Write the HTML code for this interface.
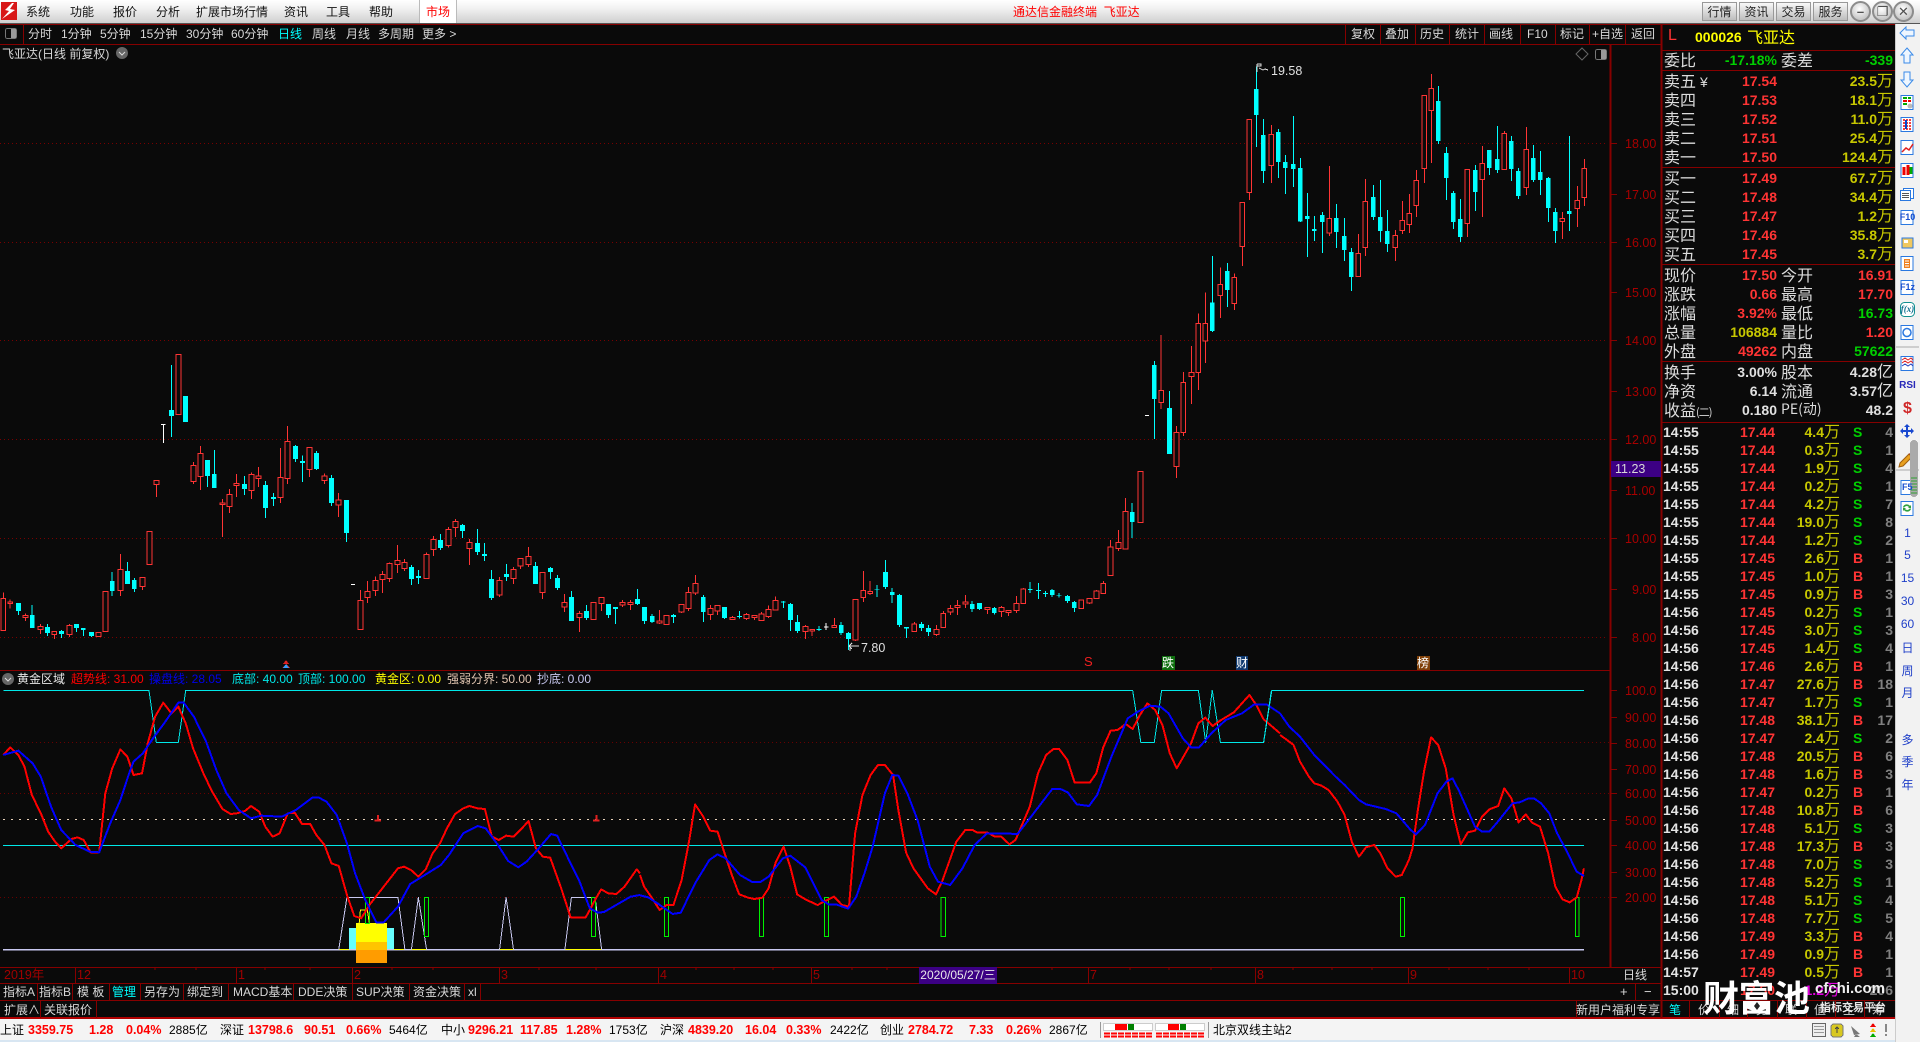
<!DOCTYPE html>
<html lang="zh"><head><meta charset="utf-8"><title>通达信金融终端 飞亚达</title>
<style>
html,body{margin:0;padding:0;background:#0a0a0a}
body{position:relative;width:1920px;height:1042px;overflow:hidden;font:12px/18px "Liberation Sans","WenQuanYi Zen Hei","Noto Sans CJK SC",sans-serif;color:#d8d8d8}
.a{position:absolute;white-space:nowrap}
.bar{position:absolute;left:0;top:0;width:1920px;height:23px;background:linear-gradient(#fff,#f2f2f2 35%,#cfcfcf);border-bottom:1px solid #555}
.m{position:absolute;top:4px;color:#111;font-size:12px;line-height:17px;white-space:nowrap}
.bt{position:absolute;top:2px;height:17px;width:33px;text-align:center;color:#222;background:linear-gradient(#f8f8f8,#bdbdbd);border:1px solid #999;line-height:18px;box-sizing:content-box}
.cb{position:absolute;top:1px;width:17px;height:17px;border-radius:50%;background:radial-gradient(circle at 45% 35%,#fff,#c8c8c8 70%);border:2px solid #8c8c8c;color:#505050;text-align:center;font:bold 13px/17px "Liberation Sans","DejaVu Sans",sans-serif}
.tb{position:absolute;top:25px;line-height:19px;color:#d8d8d8;white-space:nowrap}
.tab{position:absolute;line-height:17px;color:#d8d8d8;white-space:nowrap;margin-top:1px}
.ax{position:absolute;left:1625px;width:36px;font-size:12.5px;line-height:14px;color:#a80000;white-space:nowrap;margin-top:1px}
.dx{position:absolute;top:967px;font-size:12.5px;line-height:17px;color:#a00000;white-space:nowrap}
.ind{position:absolute;top:670px;line-height:18px;white-space:nowrap;font-size:12px}
.r{position:relative;height:19px;width:234px;font:16px/19px "WenQuanYi Zen Hei","Noto Sans CJK SC",sans-serif;color:#dcdcdc}
.r>*{position:absolute;top:0;white-space:nowrap;font-style:normal;font-family:"Liberation Sans","WenQuanYi Zen Hei",sans-serif}
.r span{left:3px;font-family:"WenQuanYi Zen Hei","Noto Sans CJK SC",sans-serif;margin-top:-1px}
.r span.b{left:120px}
.r b{font-size:14px;font-weight:bold}
.p{right:118px;color:#ff3434}.g{color:#00d000!important}.y{color:#c8c800!important}.w{color:#e0e0e0!important}
.v{right:2px;color:#c8c800}
u{text-decoration:none;font:16px/0 "WenQuanYi Zen Hei","Noto Sans CJK SC",sans-serif}
.k{position:relative;height:18px;width:234px;line-height:18px}
.k>b{position:absolute;top:0;font-size:14px;white-space:nowrap}
.t{left:2px;color:#e4e4e4}.q{right:120px;color:#ff3434}.o{right:55px;color:#c8c800}.o u{color:#c8c800}.s{left:192px;color:#00d000}.e{left:192px;color:#ff3434}.n{right:2px;color:#808080}
.st{position:absolute;top:1021px;font-size:12px;line-height:18px;color:#000;white-space:nowrap}
.sr{position:absolute;top:1021px;font-size:12.5px;line-height:18px;font-weight:bold;color:#f00;white-space:nowrap}
.sd{position:absolute;left:1895px;width:25px;text-align:center;color:#2040c8;font-size:12px;line-height:14px}
</style></head><body>
<div class="a" style="left:0;top:1019px;width:1895px;height:21px;background:#f4f4f4"></div>
<div class="a" style="left:0;top:1040px;width:1920px;height:2px;background:#d8e6f2"></div>
<div class="a" style="left:1895px;top:24px;width:25px;height:1018px;background:#f2f2f2;border-left:1px solid #ccc;box-sizing:border-box"></div>
<div class="bar"></div>
<div class="a" style="left:419px;top:0;width:38px;height:23px;background:#fff;border-left:1px solid #bbb;border-right:1px solid #bbb;box-sizing:border-box"></div>

<svg class="a" style="left:0;top:0" width="1920" height="1042" viewBox="0 0 1920 1042" fill="none" shape-rendering="crispEdges">
<style>svg *{vector-effect:non-scaling-stroke}</style>
<!-- logo -->
<rect x="1" y="2" width="16" height="18" fill="#d81818"/><path d="M12 3L5 10l4 1-7 8 13-9-5-1 4-6z" fill="#fff" shape-rendering="auto"/>
<!-- structure lines -->
<path d="M0 24.5H1895M0 44.5H1661M0 670.5H1610M0 967.5H1661M0 983.5H1661M1661 50.5H1895M1661 70.5H1895M1661 167.5H1895M1661 264.5H1895M1661 361.5H1895M1661 422.5H1895M0 1000.5H1895" stroke="#860000"/>
<path d="M0 1018H1895" stroke="#b00000" stroke-width="2"/>
<path d="M1610.5 44V967M1661.5 24V1018" stroke="#860000" stroke-width="2"/>
<path d="M23.5 24V44M1345.5 25V44M1380.5 25V44M1415.5 25V44M1449.5 25V44M1484.5 25V44M1520.5 25V44M1555.5 25V44M1589.5 25V44M1625.5 25V44M37.5 984V1000M72.5 984V1000M109.5 984V1000M140.5 984V1000M183.5 984V1000M228.5 984V1000M293.5 984V1000M352.5 984V1000M409.5 984V1000M464.5 984V1000M480.5 984V1000M40.5 1001V1018M96.5 1001V1018M1576.5 1001V1018M1689.5 1001V1018M1719.5 1001V1018M1747.5 1001V1018M1777.5 1001V1018M1806.5 1001V1018M1835.5 1001V1018M1864.5 1001V1018M1635.5 984V1000M75.5 968V983M236.5 968V983M352.5 968V983M499.5 968V983M658.5 968V983M811.5 968V983M1088.5 968V983M1255.5 968V983M1408.5 968V983M1569.5 968V983" stroke="#860000"/>
<path d="M155 968v2M196 968v2M265 968v2M310 968v2M392 968v2M433 968v2M539 968v2M596 968v2M696 968v2M734 968v2M773 968v2M852 968v2M887 968v2M1052 968v2M1130 968v2M1169 968v2M1211 968v2M1293 968v2M1332 968v2M1372 968v2M1449 968v2M1488 968v2M1529 968v2" stroke="#860000"/>
<!-- grid candle -->
<path d="M0 143.5H1605M0 242.5H1605M0 340.5H1605M0 439.5H1605M0 538.5H1605M0 637.5H1605" stroke="#780000" stroke-dasharray="1 3"/>
<path d="M1610 143.5h7M1610 194.5h7M1610 242.5h7M1610 292.5h7M1610 340.5h7M1610 391.5h7M1610 439.5h7M1610 490.5h7M1610 538.5h7M1610 589.5h7M1610 637.5h7M1610 690.5h7M1610 717.5h7M1610 743.5h7M1610 769.5h7M1610 793.5h7M1610 820.5h7M1610 845.5h7M1610 872.5h7M1610 897.5h7" stroke="#860000"/>

<!-- z10 candles -->
<g transform="translate(0,340) scale(.40816,.33333)">
<path stroke="#ff3434" d="M8 757V872M25 778V806M62 820V843M99 852V882M133 874V897M170 852V891M241 877V890M258 754V875M295 642V768M349 712V750M366 574V674M383 421V471M437 43V224M474 366V432M491 318V450M545 477V591M562 447V519M579 402V471M616 398V477M633 381V441M687 324V489M704 258V432M758 322V411M795 400V432M829 459V531M883 750V869M900 723V789M920 709V768M937 693V759M954 667V726M974 615V699M991 657V693M1045 637V716M1062 588V648M1099 561V623M1116 537V591M1150 597V675M1224 711V771M1258 681V732M1275 654V687M1295 621V681M1329 697V777M1383 762V816M1420 813V876M1454 787V839M1474 772V813M1525 780V801M1545 780V810"/>
<path stroke="#00ffff" d="M45 789V825M79 795V864M116 852V888M151 870V894M187 852V876M204 864V888M224 876V891M275 696V768M312 666V732M329 714V756M420 75V291M454 168V246M508 360V441M525 330V444M599 408V465M650 423V534M670 459V498M724 315V366M741 346V426M775 333V390M812 405V498M849 480V606M1008 675V735M1025 690V732M1079 582V630M1133 552V594M1170 567V645M1187 609V663M1204 690V780M1241 672V723M1312 666V732M1349 681V717M1366 705V750M1400 753V843M1437 795V840M1491 792V834M1508 801V852M1562 747V795"/>
<g transform="translate(-6,0)">
<path stroke="#ff3434" fill="#0a0a0a" d="M8 775h12V872h-12zM25 786h12V791h-12zM62 826h12V833h-12zM99 859h12V869h-12zM133 874h12V884h-12zM170 856h12V884h-12zM241 877h12V890h-12zM258 754h12V875h-12zM295 688h12V752h-12zM349 712h12V740h-12zM366 574h12V674h-12zM383 421h12V434h-12zM437 43h12V224h-12zM474 376h12V425h-12zM491 340h12V410h-12zM545 489h12V494h-12zM562 463h12V500h-12zM579 430h12V437h-12zM616 403h12V452h-12zM633 408h12V416h-12zM687 412h12V473h-12zM704 304h12V416h-12zM758 322h12V389h-12zM795 408h12V422h-12zM829 480h12V495h-12zM883 781h12V869h-12zM900 754h12V773h-12zM920 721h12V752h-12zM937 703h12V719h-12zM954 670h12V716h-12zM974 661h12V674h-12zM991 667h12V686h-12zM1045 643h12V716h-12zM1062 598h12V629h-12zM1099 568h12V617h-12zM1116 544h12V563h-12zM1150 607h12V626h-12zM1224 721h12V765h-12zM1258 688h12V716h-12zM1275 655h12V678h-12zM1295 649h12V674h-12zM1329 697h12V758h-12zM1383 787h12V801h-12zM1420 820h12V833h-12zM1454 787h12V839h-12zM1474 772h12V791h-12zM1525 787h12V795h-12zM1545 787h12V794h-12z"/>
<path fill="#00ffff" d="M45 789h12V813h-12zM79 825h12V864h-12zM116 861h12V879h-12zM151 873h12V882h-12zM187 852h12V864h-12zM204 864h12V870h-12zM224 876h12V888h-12zM275 723h12V753h-12zM312 693h12V732h-12zM329 720h12V747h-12zM420 210h12V228h-12zM454 168h12V246h-12zM508 360h12V408h-12zM525 402h12V444h-12zM599 432h12V447h-12zM650 435h12V504h-12zM670 471h12V477h-12zM724 318h12V357h-12zM741 363h12V369h-12zM775 339h12V387h-12zM812 414h12V489h-12zM849 480h12V579h-12zM1008 681h12V717h-12zM1025 708h12V714h-12zM1079 600h12V624h-12zM1133 555h12V573h-12zM1170 609h12V636h-12zM1187 642h12V648h-12zM1204 717h12V774h-12zM1241 702h12V711h-12zM1312 678h12V732h-12zM1349 684h12V696h-12zM1366 714h12V744h-12zM1400 771h12V843h-12zM1437 813h12V834h-12zM1491 792h12V825h-12zM1508 801h12V807h-12zM1562 777h12V792h-12z"/>
</g>
<path stroke="#fff" d="M400 253V309M395 253h10M860 733h10"/>
</g>

<!-- z11 candles -->
<g transform="translate(640,340) scale(.40816,.33333)">
<path stroke="#ff3434" d="M48 810V852M65 826V854M102 793V819M119 741V813M136 705V765M173 795V840M190 796V825M227 828V840M261 819V840M281 825V840M298 816V843M315 796V834M332 769V810M405 855V897M422 867V888M476 834V864M528 778V903M547 693V786M564 723V765M672 846V875M726 855V888M743 813V863M761 795V825M778 780V825M797 765V804M851 802V822M886 798V831M903 810V828M922 768V819M939 744V790M1081 780V806M1101 775V792M1118 750V777M1135 723V761M1153 600V707M1172 570V633M1189 474V627M1226 394V548M1277 -15V207M1314 258V414M1331 96V288M1351 18V192"/>
<path stroke="#00ffff" d="M11 801V852M30 822V849M82 822V849M155 765V846M207 801V837M244 813V836M351 783V804M369 789V873M386 825V879M439 858V873M493 846V885M511 876V930M581 735V771M601 660V747M618 744V789M636 762V861M653 861V894M690 846V873M707 855V888M814 783V816M832 789V810M868 801V823M956 726V759M976 729V777M993 753V771M1010 747V771M1027 759V772M1047 765V789M1064 783V816M1206 489V594M1260 63V297M1297 153V342"/>
<g transform="translate(-6,0)">
<path stroke="#ff3434" fill="#0a0a0a" d="M48 843h12V849h-12zM65 826h12V854h-12zM102 793h12V816h-12zM119 757h12V806h-12zM136 730h12V759h-12zM173 805h12V824h-12zM190 796h12V813h-12zM227 832h12V838h-12zM261 823h12V836h-12zM281 826h12V832h-12zM298 822h12V842h-12zM315 808h12V830h-12zM332 781h12V810h-12zM405 859h12V875h-12zM422 868h12V873h-12zM476 856h12V862h-12zM528 778h12V900h-12zM547 751h12V773h-12zM564 754h12V761h-12zM672 852h12V875h-12zM726 868h12V884h-12zM743 820h12V863h-12zM761 805h12V816h-12zM778 796h12V803h-12zM797 786h12V792h-12zM851 802h12V808h-12zM886 802h12V815h-12zM903 811h12V818h-12zM922 790h12V812h-12zM939 747h12V790h-12zM1081 780h12V806h-12zM1101 775h12V789h-12zM1118 753h12V776h-12zM1135 730h12V761h-12zM1153 621h12V707h-12zM1172 607h12V626h-12zM1189 514h12V627h-12zM1226 394h12V548h-12zM1277 151h12V188h-12zM1314 277h12V380h-12zM1331 127h12V278h-12zM1351 97h12V110h-12z"/>
<path fill="#00ffff" d="M11 801h12V843h-12zM30 828h12V846h-12zM82 825h12V831h-12zM155 771h12V816h-12zM207 801h12V834h-12zM244 828h12V831h-12zM351 784h12V787h-12zM369 792h12V840h-12zM386 846h12V873h-12zM439 867h12V870h-12zM493 855h12V879h-12zM511 879h12V897h-12zM581 747h12V749h-12zM601 696h12V741h-12zM618 756h12V765h-12zM636 765h12V855h-12zM653 861h12V866h-12zM690 852h12V864h-12zM707 864h12V876h-12zM814 792h12V807h-12zM832 789h12V807h-12zM868 804h12V819h-12zM956 747h12V750h-12zM976 750h12V753h-12zM993 759h12V762h-12zM1010 750h12V765h-12zM1027 765h12V767h-12zM1047 768h12V783h-12zM1064 786h12V804h-12zM1206 516h12V546h-12zM1260 75h12V177h-12zM1297 204h12V342h-12z"/>
</g>
<path stroke="#fff" d="M456 849V870M451 861h11M1237 226h10"/>
</g>

<!-- z12 candles -->
<g transform="translate(1180,40) scale(.33333,.33333)">
<path stroke="#ff3434" d="M55 820V1050M76 757V969M121 682V834M163 700V810M187 487V678M208 238V480M274 255V429M448 378V588M535 582V710M556 417V648M646 570V663M667 483V582M688 462V579M709 390V531M733 166V429M754 102V369M862 388V591M907 318V531M973 273V389M1039 261V465M1147 516V597M1192 438V561M1213 357V498"/>
<path stroke="#00ffff" d="M97 648V876M142 669V801M229 80V321M250 237V429M295 267V414M316 345V462M340 228V441M361 354V546M382 459V651M403 528V603M427 516V639M469 492V624M493 534V663M514 624V753M580 435V540M601 420V606M622 510V636M775 138V312M799 321V480M820 453V567M841 477V606M886 375V513M928 330V405M952 258V399M994 288V423M1015 384V477M1060 315V426M1081 333V465M1105 411V546M1126 504V609M1168 288V573"/>
<g transform="translate(-7,0)">
<path stroke="#ff3434" fill="#0a0a0a" d="M55 851h14V998h-14zM76 851h14V903h-14zM121 733h14V767h-14zM163 712h14V791h-14zM187 487h14V620h-14zM208 238h14V458h-14zM274 283h14V377h-14zM448 535h14V579h-14zM535 640h14V710h-14zM556 484h14V623h-14zM646 586h14V623h-14zM667 541h14V572h-14zM688 520h14V554h-14zM709 421h14V497h-14zM733 166h14V386h-14zM754 145h14V212h-14zM862 388h14V551h-14zM907 370h14V418h-14zM973 280h14V389h-14zM1039 328h14V443h-14zM1147 535h14V544h-14zM1192 481h14V506h-14zM1213 385h14V472h-14z"/>
<path fill="#00ffff" d="M97 787h14V873h-14zM142 693h14V750h-14zM229 147h14V225h-14zM250 285h14V393h-14zM295 276h14V366h-14zM316 366h14V384h-14zM340 372h14V387h-14zM361 384h14V544h-14zM382 528h14V537h-14zM403 567h14V573h-14zM427 525h14V546h-14zM469 534h14V576h-14zM493 588h14V630h-14zM514 636h14V711h-14zM580 471h14V531h-14zM601 531h14V573h-14zM622 573h14V612h-14zM775 183h14V303h-14zM799 339h14V414h-14zM820 459h14V546h-14zM841 537h14V591h-14zM886 390h14V456h-14zM928 330h14V384h-14zM952 357h14V390h-14zM994 303h14V387h-14zM1015 393h14V468h-14zM1060 354h14V420h-14zM1081 396h14V420h-14zM1105 414h14V504h-14zM1126 516h14V573h-14zM1168 513h14V522h-14z"/>
</g>
</g>

<!-- max/min markers -->
<path d="M1257 64h4v2h-4M1257 64V72M1259 68l2 1 2 1 2-1 3 1" stroke="#e0e0e0"/>
<path d="M849 646h10M849 646l3-3M849 646l3 3M850 646v5" stroke="#e0e0e0"/>
<path d="M1582 48l6 6-6 6-6-6z" stroke="#666" shape-rendering="auto"/>
<rect x="1595.5" y="49.5" width="11" height="10" rx="2" stroke="#777" fill="#0a0a0a"/><rect x="1601" y="50" width="5" height="9" fill="#999"/>
<rect x="5.5" y="28.5" width="11" height="10" rx="2" stroke="#777"/><rect x="11" y="29" width="5" height="9" fill="#999"/>
<!-- chevrons -->
<circle cx="122" cy="53" r="6" fill="#666" shape-rendering="auto"/><path d="M119 52l3 3 3-3" stroke="#ddd" shape-rendering="auto"/>
<circle cx="8" cy="679" r="6" fill="#666" shape-rendering="auto"/><path d="M5 678l3 3 3-3" stroke="#ddd" shape-rendering="auto"/>
<!-- event marks -->
<path d="M286 660l3 4h-6zM286 664l4 4h-8z" fill="#e02020"/><path d="M286 664l3 4h-6z" fill="#30a0ff"/>
<rect x="1162" y="656" width="13" height="14" fill="#107010"/><rect x="1236" y="656" width="12" height="14" fill="#103a70"/><rect x="1417" y="656" width="13" height="14" fill="#804008"/>

<!-- indicator grid -->
<path d="M0 742.5H1610M0 793.5H1610M0 897.5H1610" stroke="#680000" stroke-dasharray="1 3"/>
<path d="M3 819.5H1610" stroke="#e8d0b8" stroke-dasharray="2 6"/>
<path d="M3 845.5H1584" stroke="#00e8e8"/>
<path d="M3 949.5H1584" stroke="#c8c8f0" stroke-width="1.5"/>
<!-- gold block -->
<rect x="349" y="928" width="45" height="21" fill="#66ffff"/>
<rect x="356" y="923" width="31" height="19" fill="#ffff00"/>
<rect x="356" y="942" width="31" height="8" fill="#ffc400"/>
<rect x="356" y="950" width="31" height="13" fill="#ff9c00"/>

<g transform="translate(0,660) scale(.40816,.33333)" stroke-linejoin="round">
<path stroke="#ffff00" d="M830 868H855M965 868H990M1008 868H1045M1224 868H1258M1384 868H1474"/>
<path stroke="#c8c8f0" d="M830 868L850 712H975L992 868M1008 868L1025 712L1045 868M1224 868L1240 712L1258 868M1384 868L1400 712H1458L1474 868"/>
<path stroke="#ffff00" d="M880 790L883 750H900L905 790"/>
<path stroke="#00f000" d="M895 712h10V790h-10zM1040 712h10V830h-10zM1449 712h10V830h-10z"/>
<path stroke="#00e8e8" d="M8 91H365L383 247H437L455 91H1568"/>
<path stroke="#e02020" stroke-width="2" d="M926 465V478M918 481H934M1461 465V478M1453 481H1469"/>
<path stroke="#ff0000" stroke-width="2" d="M8 285L25 262L45 285L60 320L78 405L100 460L118 515L135 545L150 565L175 537L190 532L205 540L222 577L243 577L258 400L275 325L295 268L312 290L327 345L348 340L362 250L380 170L400 128L420 160L437 140L455 190L473 265L500 345L520 395L545 447L565 462L580 460L600 453L615 438L635 455L650 500L668 530L685 520L705 460L722 458L740 492L760 492L775 525L795 555L812 610L830 618L850 705L868 768L885 775L905 735L940 680L975 625L990 620L1007 630L1025 650L1043 628L1060 580L1078 550L1095 505L1115 462L1135 445L1150 438L1170 445L1188 447L1205 530L1222 540L1240 527L1258 530L1275 510L1295 483L1313 565L1330 590L1348 593L1375 685L1398 772L1435 772L1445 750L1460 715L1473 688L1490 700L1510 702L1530 680L1560 628L1568 640"/>
<path stroke="#0000ff" stroke-width="2" d="M8 285L45 272L80 310L100 350L125 440L150 510L185 555L220 575L243 577L270 490L295 420L315 345L327 305L350 280L375 235L405 185L437 128L450 128L475 170L505 245L530 330L555 400L585 450L615 475L640 467L690 470L725 450L765 413L780 412L800 425L825 465L850 550L870 640L895 720L922 787L940 787L975 740L1005 672L1025 657L1080 615L1100 585L1135 520L1170 498L1190 505L1220 555L1245 603L1270 622L1290 605L1320 565L1350 522L1365 527L1390 590L1420 665L1445 745L1465 758L1480 756L1545 710L1568 705"/>
</g>
<g transform="translate(640,660) scale(.40816,.33333)" stroke-linejoin="round">
<path stroke="#00e8e8" d="M0 91H1207L1227 247H1260L1278 91H1368L1386 247L1402 91L1422 247H1528L1548 91H1568"/>
<path stroke="#00f000" d="M60 712h10V830h-10zM293 712h10V830h-10zM452 712h10V830h-10zM738 712h10V830h-10z"/>
<path stroke="#ff0000" stroke-width="2" d="M0 645L10 680L30 715L48 750L65 735L82 735L102 660L120 545L135 433L155 470L172 512L190 515L210 590L225 645L243 703L265 713L280 717L300 713L315 685L333 605L352 560L368 620L385 703L405 718L435 735L475 710L495 735L512 740L527 520L545 405L565 345L583 315L600 315L620 345L633 450L652 578L670 625L705 685L725 703L740 665L775 545L797 510L815 510L825 517L850 517L870 530L885 530L905 553L920 540L955 440L975 340L995 285L1013 267L1027 267L1047 300L1065 368L1102 368L1118 340L1135 262L1153 212L1170 210L1190 192L1207 207L1225 165L1243 130L1262 150L1280 195L1298 280L1315 325L1350 250L1368 190L1385 173L1403 198L1420 183L1455 157L1493 105L1510 135L1528 178L1568 220"/>
<path stroke="#0000ff" stroke-width="2" d="M0 706L20 712L45 732L80 762L100 758L135 670L170 600L190 583L210 595L245 645L275 666L295 666L315 650L350 595L368 587L405 622L445 720L462 733L480 733L510 746L530 710L550 640L570 560L600 400L618 345L633 347L655 400L680 480L710 620L730 665L760 675L790 625L820 555L850 520L885 520L925 522L955 475L1010 387L1030 387L1048 397L1070 433L1100 438L1120 405L1155 290L1195 175L1220 155L1250 137L1275 140L1295 160L1330 235L1350 262L1370 262L1400 220L1435 180L1475 160L1505 133L1535 133L1568 160"/>
</g>
<g transform="translate(1100,660) scale(.35714,.33333)" stroke-linejoin="round">
<path stroke="#00e8e8" d="M480 91H1355M338 247H458L480 91"/>
<path stroke="#00f000" d="M842 712h10V830h-10zM1331 712h10V830h-10z"/>
<path stroke="#ff0000" stroke-width="2" d="M504 225L520 237L542 255L560 305L585 350L600 370L620 377L640 390L665 425L685 465L705 545L725 590L745 562L768 555L785 580L805 625L828 650L845 645L865 600L875 565L890 450L908 330L927 232L947 255L968 325L990 465L1010 553L1030 517L1050 512L1070 470L1090 448L1115 438L1132 385L1152 415L1172 487L1192 463L1210 488L1232 500L1255 580L1275 680L1295 718L1315 727L1335 712L1348 660L1355 625"/>
<path stroke="#0000ff" stroke-width="2" d="M504 160L530 200L560 230L600 285L660 350L685 375L725 420L745 433L800 447L830 460L870 510L885 523L910 495L945 400L970 365L987 355L1005 392L1050 500L1070 515L1090 515L1110 490L1155 430L1175 427L1200 415L1215 415L1235 430L1258 460L1280 520L1305 570L1335 635L1355 648"/>
</g>

<!-- status -->
<path d="M1100.5 1022V1038M1208.5 1022V1038" stroke="#999"/>
<rect x="1103.5" y="1023.5" width="49" height="7" fill="#fff" stroke="#ccc"/><rect x="1155.5" y="1023.5" width="49" height="7" fill="#fff" stroke="#ccc"/>
<rect x="1115" y="1024" width="12" height="6" fill="#f00"/><rect x="1128" y="1024" width="6" height="6" fill="#008000"/>
<rect x="1168" y="1024" width="11" height="6" fill="#f00"/><rect x="1180" y="1024" width="6" height="6" fill="#008000"/>
<path d="M1104 1033.5h49M1104 1036.5h49M1156 1033.5h49M1156 1036.5h49" stroke="#f00" stroke-width="2" stroke-dasharray="6 1"/>
<rect x="1812.5" y="1023.5" width="13" height="13" fill="#eee" stroke="#666"/><path d="M1814 1026.5h10M1814 1029.5h10M1814 1032.5h10" stroke="#999"/>
<rect x="1831" y="1024" width="12" height="13" rx="3" fill="#d8c820" stroke="#777"/><path d="M1837 1027v6M1835 1029l2-2 2 2" stroke="#444"/>
<path d="M1851 1026l9 8-6 1zM1856 1034l-2 3h6z" fill="#777" shape-rendering="auto"/>
<path d="M1873 1023l3 4h-6z" fill="#e00"/><path d="M1873 1028l3 4h-6z" fill="#e8c000"/><path d="M1873 1033l3 4h-6z" fill="#0a0"/>
<path d="M1886 1024v8M1886 1034v2" stroke="#888" stroke-width="2"/>

<!-- sidebar icons -->
<g shape-rendering="auto" stroke-width="1">
<path d="M1900 33l6-6v3h8v6h-8v3z" stroke="#3a8ae8" fill="#eef6ff"/>
<path d="M1907 48l6 7h-3v8h-6v-8h-3z" stroke="#3a8ae8" fill="#eef6ff"/>
<path d="M1904 72h6v8h3l-6 7-6-7h3z" stroke="#3a8ae8" fill="#eef6ff"/>
<path d="M1901 95.500h12v14h-12zM1901 117.500h12v14h-12zM1901 140.500h12v14h-12zM1901 163.500h12v14h-12zM1901 210.500h12v14h-12zM1901 256.500h12v14h-12zM1901 280.500h12v14h-12zM1901 325.500h12v14h-12zM1901 356.500h12v14h-12zM1901 480.500h12v14h-12zM1901 501.500h12v14h-12z" stroke="#2a78e0" fill="#fff"/>
<path d="M1903 98h4M1908 98h3" stroke="#0a0" stroke-width="2"/><path d="M1903 101h4M1908 101h3" stroke="#e00" stroke-width="2"/><path d="M1903 104h4" stroke="#0a0" stroke-width="2"/><circle cx="1910" cy="106" r="2.500" fill="#bbb"/>
<path d="M1903 120h8M1903 123h8M1903 126h8M1903 129h8" stroke="#e00" stroke-width="1.500" stroke-dasharray="2 1"/><path d="M1906 120v9" stroke="#04c" stroke-width="2"/>
<path d="M1902 152l4-4 3 2 4-6" stroke="#e02020" stroke-width="1.500"/>
<path d="M1904 167v8M1908 165v10" stroke="#e00" stroke-width="3"/><path d="M1911 167v7" stroke="#0a0" stroke-width="3"/>
<rect x="1903.500" y="188.500" width="10" height="10" fill="#fff" stroke="#2a78e0"/><rect x="1900.500" y="190.500" width="10" height="10" fill="#fff" stroke="#2a78e0"/><path d="M1902 193.500h7M1902 195.500h7M1902 197.500h7" stroke="#555"/>
<path d="M1902 238h11v10h-11z" fill="#f0c860" stroke="#2a78e0"/><rect x="1904" y="240" width="4" height="3" fill="#fff"/>
<rect x="1904" y="259" width="6" height="9" fill="#f08020"/><path d="M1905 261h4M1905 263.500h4M1905 266h4" stroke="#fff"/>
<rect x="1900.500" y="302.500" width="14" height="14" rx="4" fill="#fff" stroke="#109090"/>
<circle cx="1907" cy="332.500" r="4" fill="none" stroke="#2a78e0" stroke-width="1.500"/>
<path d="M1902 360l3-2 3 2 3-2 2 2M1902 363l3-2 3 2 3-2 2 2" stroke="#e02020"/><path d="M1902 366l3-2 3 2 3-2 2 2" stroke="#2040c0"/>
<path d="M1896 347h23M1896 470h23" stroke="#aaa"/>
<path d="M1907 424l3 3h-2v3h3v-2l3 3-3 3v-2h-3v3h2l-3 3-3-3h2v-3h-3v2l-3-3 3-3v2h3v-3h-2z" fill="#1848d0"/>
<path d="M1900 463l9-9 3 3-9 9-4 1z" fill="#e8a020" stroke="#a06010"/><path d="M1909 454l2-2 3 3-2 2z" fill="#a03030"/>
<path d="M1903 507a4 4 0 0 1 7-1l1-1v3h-3l1-1a3 3 0 0 0-5 1zM1911 509a4 4 0 0 1-7 1l-1 1v-3h3l-1 1a3 3 0 0 0 5-1z" fill="#30a040"/>
</g>
<rect x="1910" y="440" width="8" height="57" rx="4" fill="#aaa"/><path d="M1911 478h6M1911 481h6M1911 484h6M1911 487h6M1911 490h6M1911 493h6" stroke="#2fa030"/>
</svg>

<!-- menu -->
<span class="m" style="left:26px">系统</span><span class="m" style="left:70px">功能</span><span class="m" style="left:113px">报价</span><span class="m" style="left:156px">分析</span><span class="m" style="left:196px">扩展市场行情</span><span class="m" style="left:284px">资讯</span><span class="m" style="left:326px">工具</span><span class="m" style="left:369px">帮助</span><span class="m" style="left:426px;color:#f00">市场</span>
<span class="m" style="left:1013px;color:#f00">通达信金融终端&nbsp;&nbsp;飞亚达</span>
<span class="bt" style="left:1702px">行情</span><span class="bt" style="left:1739px">资讯</span><span class="bt" style="left:1776px">交易</span><span class="bt" style="left:1813px">服务</span>
<span class="cb" style="left:1850px">–</span><span class="cb" style="left:1872px">❐</span><span class="cb" style="left:1893px">✕</span>

<!-- toolbar -->
<span class="tb" style="left:28px">分时</span><span class="tb" style="left:61px">1分钟</span><span class="tb" style="left:100px">5分钟</span><span class="tb" style="left:140px">15分钟</span><span class="tb" style="left:186px">30分钟</span><span class="tb" style="left:231px">60分钟</span><span class="tb" style="left:278px;color:#00ffff">日线</span><span class="tb" style="left:312px">周线</span><span class="tb" style="left:346px">月线</span><span class="tb" style="left:378px">多周期</span><span class="tb" style="left:422px">更多 &gt;</span>
<span class="tb" style="left:1351px">复权</span><span class="tb" style="left:1385px">叠加</span><span class="tb" style="left:1420px">历史</span><span class="tb" style="left:1455px">统计</span><span class="tb" style="left:1489px">画线</span><span class="tb" style="left:1527px">F10</span><span class="tb" style="left:1560px">标记</span><span class="tb" style="left:1592px">+自选</span><span class="tb" style="left:1631px">返回</span>
<span class="a" style="left:2px;top:45px;color:#d8d8d8">飞亚达(日线 前复权)</span>
<span class="a" style="left:1271px;top:62px;color:#e0e0e0;font-size:12.5px">19.58</span>
<span class="a" style="left:861px;top:639px;color:#e0e0e0;font-size:12.5px">7.80</span>
<span class="a" style="left:1084px;top:655px;color:#f02020;font-size:13px;line-height:14px">S</span>
<span class="a" style="left:1162px;top:657px;color:#fff;font-size:12px;line-height:12px">跌</span><span class="a" style="left:1236px;top:657px;color:#fff;font-size:12px;line-height:12px">财</span><span class="a" style="left:1417px;top:657px;color:#fff;font-size:12px;line-height:12px">榜</span>

<!-- axis -->
<span class="ax" style="top:136px">18.00</span><span class="ax" style="top:187px">17.00</span><span class="ax" style="top:235px">16.00</span><span class="ax" style="top:285px">15.00</span><span class="ax" style="top:333px">14.00</span><span class="ax" style="top:384px">13.00</span><span class="ax" style="top:432px">12.00</span><span class="ax" style="top:483px">11.00</span><span class="ax" style="top:531px">10.00</span><span class="ax" style="top:582px;left:1632px">9.00</span><span class="ax" style="top:630px;left:1632px">8.00</span>
<span class="a" style="left:1611px;top:461px;width:50px;height:16px;background:#3c0084;color:#d8d8d8;line-height:16px;font-size:12.5px;padding-left:4px;box-sizing:border-box">11.23</span>
<span class="ax" style="top:683px">100.0</span><span class="ax" style="top:710px">90.00</span><span class="ax" style="top:736px">80.00</span><span class="ax" style="top:762px">70.00</span><span class="ax" style="top:786px">60.00</span><span class="ax" style="top:813px">50.00</span><span class="ax" style="top:838px">40.00</span><span class="ax" style="top:865px">30.00</span><span class="ax" style="top:890px">20.00</span>

<!-- indicator title -->
<span class="ind" style="left:17px;color:#e8e8e8">黄金区域</span><span class="ind" style="left:71px;color:#f00">超势线: 31.00</span><span class="ind" style="left:149px;color:#0000e8">操盘线: 28.05</span><span class="ind" style="left:232px;color:#00e8e8">底部: 40.00</span><span class="ind" style="left:298px;color:#00e8e8">顶部: 100.00</span><span class="ind" style="left:375px;color:#ffff00">黄金区: 0.00</span><span class="ind" style="left:447px;color:#e0c4b0">强弱分界: 50.00</span><span class="ind" style="left:537px;color:#c8c8f0">抄底: 0.00</span>

<!-- date axis -->
<span class="dx" style="left:4px">2019年</span><span class="dx" style="left:77px">12</span><span class="dx" style="left:238px">1</span><span class="dx" style="left:354px">2</span><span class="dx" style="left:501px">3</span><span class="dx" style="left:660px">4</span><span class="dx" style="left:813px">5</span><span class="dx" style="left:1090px">7</span><span class="dx" style="left:1257px">8</span><span class="dx" style="left:1410px">9</span><span class="dx" style="left:1571px">10</span>
<span class="a" style="left:919px;top:967px;width:78px;height:17px;background:#3c0084;color:#e8e8e8;line-height:17px;text-align:center">2020/05/27/三</span>
<span class="a" style="left:1623px;top:967px;line-height:17px">日线</span><span class="a" style="left:1620px;top:983px;line-height:17px;font-size:13px">+</span><span class="a" style="left:1644px;top:983px;line-height:17px;font-size:13px">−</span>

<!-- tabs -->
<span class="tab" style="left:3px;top:983px">指标A</span><span class="tab" style="left:39px;top:983px">指标B</span><span class="tab" style="left:77px;top:983px">模 板</span><span class="tab" style="left:112px;top:983px;color:#00ffff">管理</span><span class="tab" style="left:144px;top:983px">另存为</span><span class="tab" style="left:187px;top:983px">绑定到</span><span class="tab" style="left:233px;top:983px">MACD基本</span><span class="tab" style="left:298px;top:983px">DDE决策</span><span class="tab" style="left:356px;top:983px">SUP决策</span><span class="tab" style="left:413px;top:983px">资金决策</span><span class="tab" style="left:468px;top:983px">xl</span>
<span class="tab" style="left:4px;top:1001px">扩展∧</span><span class="tab" style="left:44px;top:1001px">关联报价</span>
<span class="tab" style="left:1576px;top:1001px">新用户福利专享</span>
<span class="tab" style="left:1669px;top:1001px;color:#00ffff">笔</span><span class="tab" style="left:1698px;top:1001px">价</span><span class="tab" style="left:1727px;top:1001px">细</span><span class="tab" style="left:1756px;top:1001px">势</span><span class="tab" style="left:1785px;top:1001px">联</span><span class="tab" style="left:1814px;top:1001px">值</span><span class="tab" style="left:1843px;top:1001px">主</span><span class="tab" style="left:1872px;top:1001px">筹</span>

<!-- quote panel -->
<div class="a" style="left:1661px;top:25px;width:234px;line-height:22px;font-size:16px;font-family:'WenQuanYi Zen Hei','Noto Sans CJK SC',sans-serif"><span class="a" style="left:7px;color:#ff3434;font-family:'Liberation Sans',sans-serif">L</span><b class="a" style="left:34px;top:1px;color:#ffff00;font:bold 14px/22px 'Liberation Sans',sans-serif">000026</b><span class="a" style="left:86px;color:#ffff00">飞亚达</span></div>
<div class="a" style="left:1661px;top:51px"><div class="r"><span>委比</span><b class="p g">-17.18%</b><span class="b">委差</span><b class="v g">-339</b></div></div>
<div class="a" style="left:1661px;top:72px">
<div class="r"><span>卖五<em style="font:14px 'Liberation Sans',sans-serif;margin-left:4px">¥</em></span><b class="p">17.54</b><b class="v">23.5<u>万</u></b></div>
<div class="r"><span>卖四</span><b class="p">17.53</b><b class="v">18.1<u>万</u></b></div>
<div class="r"><span>卖三</span><b class="p">17.52</b><b class="v">11.0<u>万</u></b></div>
<div class="r"><span>卖二</span><b class="p">17.51</b><b class="v">25.4<u>万</u></b></div>
<div class="r"><span>卖一</span><b class="p">17.50</b><b class="v">124.4<u>万</u></b></div>
</div>
<div class="a" style="left:1661px;top:169px">
<div class="r"><span>买一</span><b class="p">17.49</b><b class="v">67.7<u>万</u></b></div>
<div class="r"><span>买二</span><b class="p">17.48</b><b class="v">34.4<u>万</u></b></div>
<div class="r"><span>买三</span><b class="p">17.47</b><b class="v">1.2<u>万</u></b></div>
<div class="r"><span>买四</span><b class="p">17.46</b><b class="v">35.8<u>万</u></b></div>
<div class="r"><span>买五</span><b class="p">17.45</b><b class="v">3.7<u>万</u></b></div>
</div>
<div class="a" style="left:1661px;top:266px">
<div class="r"><span>现价</span><b class="p">17.50</b><span class="b">今开</span><b class="v" style="color:#ff3434">16.91</b></div>
<div class="r"><span>涨跌</span><b class="p">0.66</b><span class="b">最高</span><b class="v" style="color:#ff3434">17.70</b></div>
<div class="r"><span>涨幅</span><b class="p">3.92%</b><span class="b">最低</span><b class="v g">16.73</b></div>
<div class="r"><span>总量</span><b class="p y">106884</b><span class="b">量比</span><b class="v" style="color:#ff3434">1.20</b></div>
<div class="r"><span>外盘</span><b class="p">49262</b><span class="b">内盘</span><b class="v g">57622</b></div>
</div>
<div class="a" style="left:1661px;top:363px">
<div class="r"><span>换手</span><b class="p w">3.00%</b><span class="b">股本</span><b class="v w">4.28<u>亿</u></b></div>
<div class="r"><span>净资</span><b class="p w">6.14</b><span class="b">流通</span><b class="v w">3.57<u>亿</u></b></div>
<div class="r"><span>收益<em style="font-style:normal;font-size:11px;letter-spacing:-1px">(二)</em></span><b class="p w">0.180</b><span class="b" style="font-size:14px">PE(动)</span><b class="v w">48.2</b></div>
</div>

<div class="a" style="left:1661px;top:423px">
<div class="k"><b class="t">14:55</b><b class="q">17.44</b><b class="o">4.4<u>万</u></b><b class="s">S</b><b class="n">4</b></div>
<div class="k"><b class="t">14:55</b><b class="q">17.44</b><b class="o">0.3<u>万</u></b><b class="s">S</b><b class="n">1</b></div>
<div class="k"><b class="t">14:55</b><b class="q">17.44</b><b class="o">1.9<u>万</u></b><b class="s">S</b><b class="n">4</b></div>
<div class="k"><b class="t">14:55</b><b class="q">17.44</b><b class="o">0.2<u>万</u></b><b class="s">S</b><b class="n">1</b></div>
<div class="k"><b class="t">14:55</b><b class="q">17.44</b><b class="o">4.2<u>万</u></b><b class="s">S</b><b class="n">7</b></div>
<div class="k"><b class="t">14:55</b><b class="q">17.44</b><b class="o">19.0<u>万</u></b><b class="s">S</b><b class="n">8</b></div>
<div class="k"><b class="t">14:55</b><b class="q">17.44</b><b class="o">1.2<u>万</u></b><b class="s">S</b><b class="n">2</b></div>
<div class="k"><b class="t">14:55</b><b class="q">17.45</b><b class="o">2.6<u>万</u></b><b class="e">B</b><b class="n">1</b></div>
<div class="k"><b class="t">14:55</b><b class="q">17.45</b><b class="o">1.0<u>万</u></b><b class="e">B</b><b class="n">1</b></div>
<div class="k"><b class="t">14:55</b><b class="q">17.45</b><b class="o">0.9<u>万</u></b><b class="e">B</b><b class="n">3</b></div>
<div class="k"><b class="t">14:56</b><b class="q">17.45</b><b class="o">0.2<u>万</u></b><b class="s">S</b><b class="n">1</b></div>
<div class="k"><b class="t">14:56</b><b class="q">17.45</b><b class="o">3.0<u>万</u></b><b class="s">S</b><b class="n">3</b></div>
<div class="k"><b class="t">14:56</b><b class="q">17.45</b><b class="o">1.4<u>万</u></b><b class="s">S</b><b class="n">4</b></div>
<div class="k"><b class="t">14:56</b><b class="q">17.46</b><b class="o">2.6<u>万</u></b><b class="e">B</b><b class="n">1</b></div>
<div class="k"><b class="t">14:56</b><b class="q">17.47</b><b class="o">27.6<u>万</u></b><b class="e">B</b><b class="n">18</b></div>
<div class="k"><b class="t">14:56</b><b class="q">17.47</b><b class="o">1.7<u>万</u></b><b class="s">S</b><b class="n">1</b></div>
<div class="k"><b class="t">14:56</b><b class="q">17.48</b><b class="o">38.1<u>万</u></b><b class="e">B</b><b class="n">17</b></div>
<div class="k"><b class="t">14:56</b><b class="q">17.47</b><b class="o">2.4<u>万</u></b><b class="s">S</b><b class="n">2</b></div>
<div class="k"><b class="t">14:56</b><b class="q">17.48</b><b class="o">20.5<u>万</u></b><b class="e">B</b><b class="n">6</b></div>
<div class="k"><b class="t">14:56</b><b class="q">17.48</b><b class="o">1.6<u>万</u></b><b class="e">B</b><b class="n">3</b></div>
<div class="k"><b class="t">14:56</b><b class="q">17.47</b><b class="o">0.2<u>万</u></b><b class="e">B</b><b class="n">1</b></div>
<div class="k"><b class="t">14:56</b><b class="q">17.48</b><b class="o">10.8<u>万</u></b><b class="e">B</b><b class="n">6</b></div>
<div class="k"><b class="t">14:56</b><b class="q">17.48</b><b class="o">5.1<u>万</u></b><b class="s">S</b><b class="n">3</b></div>
<div class="k"><b class="t">14:56</b><b class="q">17.48</b><b class="o">17.3<u>万</u></b><b class="e">B</b><b class="n">3</b></div>
<div class="k"><b class="t">14:56</b><b class="q">17.48</b><b class="o">7.0<u>万</u></b><b class="s">S</b><b class="n">3</b></div>
<div class="k"><b class="t">14:56</b><b class="q">17.48</b><b class="o">5.2<u>万</u></b><b class="s">S</b><b class="n">1</b></div>
<div class="k"><b class="t">14:56</b><b class="q">17.48</b><b class="o">5.1<u>万</u></b><b class="s">S</b><b class="n">4</b></div>
<div class="k"><b class="t">14:56</b><b class="q">17.48</b><b class="o">7.7<u>万</u></b><b class="s">S</b><b class="n">5</b></div>
<div class="k"><b class="t">14:56</b><b class="q">17.49</b><b class="o">3.3<u>万</u></b><b class="e">B</b><b class="n">4</b></div>
<div class="k"><b class="t">14:56</b><b class="q">17.49</b><b class="o">0.9<u>万</u></b><b class="e">B</b><b class="n">1</b></div>
<div class="k"><b class="t">14:57</b><b class="q">17.49</b><b class="o">0.5<u>万</u></b><b class="e">B</b><b class="n">1</b></div>
<div class="k"><b class="t">15:00</b><b class="q">17.50</b><b class="o" style="color:#e000e0">1.2<u style="color:#e000e0">万</u></b><b class="n">206</b></div>
</div>

<!-- status bar -->
<span class="st" style="left:0">上证</span><span class="sr" style="left:28px">3359.75</span><span class="sr" style="left:89px">1.28</span><span class="sr" style="left:126px">0.04%</span><span class="st" style="left:169px">2885亿</span>
<span class="st" style="left:220px">深证</span><span class="sr" style="left:248px">13798.6</span><span class="sr" style="left:304px">90.51</span><span class="sr" style="left:346px">0.66%</span><span class="st" style="left:389px">5464亿</span>
<span class="st" style="left:441px">中小</span><span class="sr" style="left:468px">9296.21</span><span class="sr" style="left:520px">117.85</span><span class="sr" style="left:566px">1.28%</span><span class="st" style="left:609px">1753亿</span>
<span class="st" style="left:660px">沪深</span><span class="sr" style="left:688px">4839.20</span><span class="sr" style="left:745px">16.04</span><span class="sr" style="left:786px">0.33%</span><span class="st" style="left:830px">2422亿</span>
<span class="st" style="left:880px">创业</span><span class="sr" style="left:908px">2784.72</span><span class="sr" style="left:969px">7.33</span><span class="sr" style="left:1006px">0.26%</span><span class="st" style="left:1049px">2867亿</span>
<span class="st" style="left:1213px">北京双线主站2</span>

<!-- sidebar text -->
<span class="sd" style="top:210px;font:bold 9px/14px 'Liberation Sans',sans-serif;color:#1850d0">F10</span>
<span class="sd" style="top:280px;font:bold 9px/14px 'Liberation Sans',sans-serif;color:#1850d0">F1z</span>
<span class="sd" style="top:302px;font:italic bold 9px/14px 'Liberation Serif',serif;color:#107090">f(x)</span>
<span class="sd" style="top:379px;font:bold 10px/14px 'Liberation Sans',sans-serif;color:#2828b8">RSI</span>
<span class="sd" style="top:401px;font:bold 16px/16px 'Liberation Sans',sans-serif;color:#d02828">$</span>
<span class="sd" style="top:480px;font:bold 9px/14px 'Liberation Sans',sans-serif;color:#1850d0;text-align:left;padding-left:7px;box-sizing:border-box">F5</span>
<span class="sd" style="top:526px">1</span><span class="sd" style="top:548px">5</span><span class="sd" style="top:571px">15</span><span class="sd" style="top:594px">30</span><span class="sd" style="top:617px">60</span><span class="sd" style="top:641px">日</span><span class="sd" style="top:664px">周</span><span class="sd" style="top:686px">月</span><span class="sd" style="top:733px">多</span><span class="sd" style="top:755px">季</span><span class="sd" style="top:778px">年</span>

<!-- watermark -->
<span class="a" style="left:1703px;top:975px;font:bold 36px/42px 'Noto Sans CJK SC',sans-serif;color:#fff;letter-spacing:-.5px">财富池</span>
<svg class="a" style="left:1745px;top:1001px" width="24" height="10"><ellipse cx="12" cy="5" rx="11" ry="5" fill="#fff"/><path d="M12 1l3 4-3 4-3-4z" fill="#222"/></svg>
<span class="a" style="left:1815px;top:980px;font:bold 15px/18px 'Liberation Sans',sans-serif;color:#f0f0f0">cfchi.com</span>
<span class="a" style="left:1820px;top:999px;font:bold 11px/16px 'Noto Sans CJK SC',sans-serif;color:#e8e8e8">指标交易平台</span>
</body></html>
